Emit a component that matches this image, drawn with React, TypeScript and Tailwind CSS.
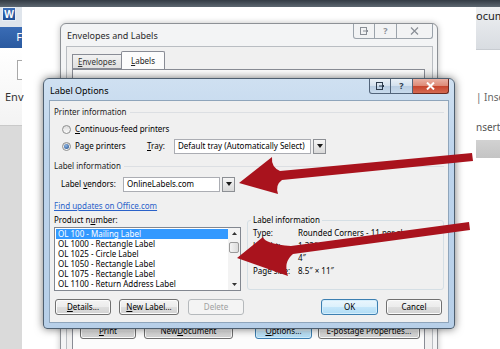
import React from "react";

type BtnProps = {
  className?: string;
  variant?: "normal" | "default" | "disabled";
  children: React.ReactNode;
};

function Button({ className = "", variant = "normal", children }: BtnProps) {
  const look =
    variant === "default"
      ? "border-[#3c7fb1] bg-[linear-gradient(#eaf6fd_0%,#dcf1fc_48%,#c4e6fa_52%,#b0dcf5_100%)] shadow-[inset_0_0_0_1px_#d4eefc] text-black"
      : variant === "disabled"
        ? "border-[#b5b9bc] bg-[#f4f4f4] text-[#a0a0a0]"
        : "border-[#707070] bg-[linear-gradient(#f4f4f4_0%,#ececec_48%,#dedede_52%,#d2d2d2_100%)] shadow-[inset_0_0_0_1px_#fbfbfb] text-black";
  return (
    <div className={`flex h-[16px] items-center justify-center rounded-[3px] border text-[8px] ${look} ${className}`}>
      {children}
    </div>
  );
}

function Radio({ checked = false }: { checked?: boolean }) {
  return (
    <div className="flex h-[9px] w-[9px] shrink-0 items-center justify-center rounded-full border border-[#8e8f8f] bg-[linear-gradient(#dcdcdc,#fbfbfb)]">
      {checked && <div className="h-[5px] w-[5px] rounded-full bg-[radial-gradient(circle_at_40%_35%,#8fb7e6,#1c4a86)]" />}
    </div>
  );
}

function DropButton() {
  return (
    <div className="flex h-[15px] w-[13px] shrink-0 items-center justify-center border border-[#8c8f94] bg-[linear-gradient(#f5f5f5,#d9d9d9)]">
      <svg width="6" height="4" viewBox="0 0 6 4">
        <path d="M0 0h6L3 4z" fill="#1a1a1a" />
      </svg>
    </div>
  );
}

function Select({ width, value }: { width: string; value: string }) {
  return (
    <div className="flex items-center">
      <div className={`flex h-[15px] items-center border border-[#abadb3] bg-white pl-[3px] text-[8px] whitespace-nowrap overflow-hidden ${width}`}>
        {value}
      </div>
      <div className="ml-[2px]">
        <DropButton />
      </div>
    </div>
  );
}

function GroupHeader({ label }: { label: string }) {
  return (
    <div className="flex h-[12px] items-center">
      <span className="text-[#1e1e1e]">{label}</span>
      <div className="ml-[3px] h-px flex-1 bg-[#dcdfe3]" />
    </div>
  );
}

function CaptionButtons({ active }: { active: boolean }) {
  const side = active
    ? "border-[#52647a] bg-[linear-gradient(#e9f0f7_0%,#d4e1ee_48%,#b9cde2_52%,#c9dbec_100%)]"
    : "border-[#9ba3ab] bg-[#f2f3f4]";
  const close = active
    ? "border-[#6b2a21] bg-[linear-gradient(#eab1a4_0%,#de8a77_48%,#c7442d_52%,#d56a52_100%)]"
    : "border-[#9ba3ab] bg-[#f2f3f4]";
  const ink = active ? "#2b3a4c" : "#8a8f96";
  return (
    <div className="flex">
      <div className={`flex h-[15px] w-[22px] items-center justify-center rounded-bl-[3px] border border-t-0 ${side}`}>
        <svg width="9" height="8" viewBox="0 0 9 8">
          <rect x="0.5" y="0.5" width="6" height="7" fill="none" stroke={ink} />
          <path d="M3 4h5M6 2l2 2-2 2" fill="none" stroke={ink} />
        </svg>
      </div>
      <div className={`flex h-[15px] w-[22px] items-center justify-center border border-l-0 border-t-0 text-[9px] font-bold ${side}`} style={{ color: ink }}>
        ?
      </div>
      <div className={`flex h-[15px] w-[36px] items-center justify-center rounded-br-[3px] border border-l-0 border-t-0 ${close}`}>
        <svg width="9" height="8" viewBox="0 0 9 8">
          <path d="M1 0.5l7 7M8 0.5l-7 7" stroke={active ? "#ffffff" : ink} strokeWidth={active ? 2 : 1.2} />
        </svg>
      </div>
    </div>
  );
}

const products = [
  "OL 100 - Mailing Label",
  "OL 1000 - Rectangle Label",
  "OL 1025 - Circle Label",
  "OL 1050 - Rectangle Label",
  "OL 1075 - Rectangle Label",
  "OL 1100 - Return Address Label",
];

const details = [
  ["Type:", "Rounded Corners - 11 per sheet"],
  ["Height:", "1.33\u2033"],
  ["Width:", "4\u2033"],
  ["Page size:", "8.5\u2033 \u00d7 11\u2033"],
];

function EnvelopesDialog() {
  return (
    <div className="absolute left-[60px] top-[23px] flex h-[340px] w-[378px] flex-col rounded-t-[6px] border border-[#8d9196] bg-[#f3f4f5] pl-[5px] pr-[4px] shadow-[0_0_6px_rgba(0,0,0,0.25)]">
      <div className="flex h-[22px] items-start justify-between">
        <span className="pl-[1px] pt-[5px] text-[9px] text-[#2a2a2a]">Envelopes and Labels</span>
        <CaptionButtons active={false} />
      </div>
      <div className="flex flex-1 flex-col border border-[#b9bdc2] bg-[#f0f0f0] pl-[5px] pr-[7px] pt-[4px]">
        <div className="flex items-end text-[8px]">
          <div className="flex h-[15px] w-[49px] items-center justify-center border border-r-0 border-[#898c95] bg-[linear-gradient(#f2f2f2,#e0e0e0)] text-[#333]">
            <u>E</u>nvelopes
          </div>
          <div className="-mb-px flex h-[19px] w-[44px] items-center justify-center rounded-t-[2px] border border-b-0 border-[#898c95] bg-[#fcfcfc] text-[#222]">
            <u>L</u>abels
          </div>
        </div>
        <div className="flex flex-1 flex-col border border-[#898c95] bg-[#fcfcfc] pl-[7px] pt-[253px]">
          <div className="flex text-[8px]">
            <Button className="w-[56px]">
              <u>P</u>rint
            </Button>
            <Button className="ml-[8px] w-[89px]">
              New <u>D</u>ocument
            </Button>
            <Button className="ml-[22px] w-[57px]" variant="default">
              <u>O</u>ptions...
            </Button>
            <Button className="ml-[6px] w-[102px]">E-postage Properties...</Button>
          </div>
        </div>
      </div>
    </div>
  );
}

function LabelOptionsDialog() {
  return (
    <div className="absolute left-[43px] top-[78px] flex h-[251px] w-[412px] flex-col rounded-t-[6px] rounded-b-[4px] border border-[#4e5f70] bg-[linear-gradient(#cfe0f1_0%,#bdd4ec_30%,#b7cfe8_100%)] px-[5px] pb-[5px] shadow-[0_0_9px_rgba(0,0,0,0.55)]">
      <div className="flex h-[21px] items-start justify-between">
        <span className="pl-[1px] pt-[5px] text-[9px] text-black">Label Options</span>
        <CaptionButtons active />
      </div>
      <div className="flex flex-1 flex-col border border-[#8fa5bb] bg-[#f0f0f0] px-[4px] pt-[5px] text-[8px] leading-[12px] text-black">
        <GroupHeader label="Printer information" />
        <div className="mt-[5px] flex h-[12px] items-center pl-[8px]">
          <Radio />
          <span className="ml-[4px]">
            <u>C</u>ontinuous-feed printers
          </span>
        </div>
        <div className="mt-[3px] flex h-[16px] items-center pl-[8px]">
          <Radio checked />
          <span className="ml-[4px] w-[72px]">
            Pa<u>g</u>e printers
          </span>
          <span className="w-[27px]">
            <u>T</u>ray:
          </span>
          <Select width="w-[137px]" value="Default tray (Automatically Select)" />
        </div>
        <div className="mt-[6px]">
          <GroupHeader label="Label information" />
        </div>
        <div className="mt-[4px] flex h-[16px] items-center pl-[7px]">
          <span className="w-[62px]">
            Label <u>v</u>endors:
          </span>
          <Select width="w-[97px]" value="OnlineLabels.com" />
        </div>
        <div className="mt-[8px] flex h-[12px] items-center">
          <span className="text-[#2a62c9] underline">Find updates on Office.com</span>
        </div>
        <div className="mt-[2px] flex">
          <div className="flex w-[188px] flex-col">
            <div className="flex h-[12px] items-center">
              Product n<u>u</u>mber:
            </div>
            <div className="mt-[1px] flex h-[64px] border border-[#828790] bg-white">
              <div className="flex flex-1 flex-col pl-[1px] pt-[1px]">
                {products.map((p, i) => (
                  <div
                    key={p}
                    className={`flex h-[10px] items-center pl-[2px] leading-[10px] ${i === 0 ? "bg-[#3399ff] text-white" : "text-black"}`}
                  >
                    {p}
                  </div>
                ))}
              </div>
              <div className="flex w-[12px] flex-col items-center bg-[#f3f3f3]">
                <div className="flex h-[11px] items-center">
                  <svg width="5" height="3" viewBox="0 0 5 3">
                    <path d="M0 3L2.5 0 5 3z" fill="#333" />
                  </svg>
                </div>
                <div className="mt-[3px] h-[11px] w-[10px] rounded-[2px] border border-[#9a9a9a] bg-[linear-gradient(90deg,#f4f4f4,#dcdcdc)]" />
                <div className="flex flex-1 items-end pb-[4px]">
                  <svg width="5" height="3" viewBox="0 0 5 3">
                    <path d="M0 0h5L2.5 3z" fill="#333" />
                  </svg>
                </div>
              </div>
            </div>
          </div>
          <fieldset className="ml-[6px] h-[76px] w-[198px] rounded-[3px] border border-[#d5dfe5] pl-[5px]">
            <legend className="ml-[-2px] px-[2px] leading-[12px]">Label information</legend>
            <div className="pt-[1px]">
              {details.map(([k, v]) => (
                <div key={k} className="flex h-[12.5px] items-center">
                  <span className="w-[45px]">{k}</span>
                  <span>{v}</span>
                </div>
              ))}
            </div>
          </fieldset>
        </div>
        <div className="mt-[8px] flex items-center justify-between pl-[1px] pr-[2px]">
          <div className="flex">
            <Button className="w-[56px]">
              <u>D</u>etails...
            </Button>
            <Button className="ml-[8px] w-[60px]">
              <u>N</u>ew Label...
            </Button>
            <Button className="ml-[9px] w-[56px]" variant="disabled">
              Delete
            </Button>
          </div>
          <div className="flex">
            <Button className="w-[57px]" variant="default">
              OK
            </Button>
            <Button className="ml-[8px] w-[56px]">Cancel</Button>
          </div>
        </div>
      </div>
    </div>
  );
}

export default function App() {
  return (
    <div className="relative h-[349px] w-[500px] overflow-hidden bg-white font-['Noto_Sans',sans-serif]">
      {/* word window behind */}
      <div className="absolute inset-x-0 top-0 h-[7px] bg-[linear-gradient(#333b44,#5d6771)]" />
      <div className="absolute left-0 top-[7px] flex h-[342px] w-[22px] flex-col">
        <div className="flex h-[20px] items-start bg-[#dfe5ec] pl-[2px]">
          <div className="flex h-[14px] w-[14px] items-center justify-center border border-[#e8eef5] bg-[linear-gradient(#3d6fb8,#1f4f96)] text-[10px] font-bold leading-none text-white">
            W
          </div>
        </div>
        <div className="flex h-[21px] items-center justify-end bg-[linear-gradient(#3a6cb5,#2a5aa0)] text-[11px] text-white">
          F
        </div>
        <div className="flex h-[77px] flex-col bg-[linear-gradient(#ffffff,#f3f3f3)]">
          <div className="ml-[17px] mt-[12px] h-[20px] w-[5px] border border-r-0 border-[#a8a8a8] bg-white" />
          <span className="mt-[9px] pl-[5px] text-[11px] text-[#333]">Env</span>
        </div>
        <div className="flex-1 border-t border-[#c9c9c9] bg-[#dadada]" />
      </div>
      <div className="absolute left-[476px] top-[7px] flex h-[151px] w-[24px] flex-col overflow-hidden">
        <div className="flex h-[43px] flex-col border-b border-[#c8ccd1] bg-[linear-gradient(#eef0f2,#d8dce1)]">
          <span className="whitespace-nowrap pt-[1px] text-[11px] text-[#222]">ocument1</span>
        </div>
        <div className="flex h-[90px] flex-col bg-white">
          <span className="mt-[40px] whitespace-nowrap text-[10px] text-[#666]">| Inse</span>
          <span className="mt-[15px] whitespace-nowrap text-[10px] text-[#555]">nsert</span>
        </div>
        <div className="flex-1 bg-[linear-gradient(#d2d2d2,#c4c4c4)]" />
      </div>

      <EnvelopesDialog />
      <LabelOptionsDialog />

      {/* red callout arrows */}
      <svg className="pointer-events-none absolute inset-0" width="500" height="349" viewBox="0 0 500 349">
        <path
          d="M239 183 L272 157 Q271 167 280 171 L472 153 L473 161 L282 180 Q275 185 278 194 Z"
          fill="#a9131d"
        />
        <path
          d="M237 258 L263 237 Q265 244 291 246 L469 222 L470 230 L293 254 Q283 262 288 276 Z"
          fill="#a9131d"
        />
      </svg>
    </div>
  );
}
